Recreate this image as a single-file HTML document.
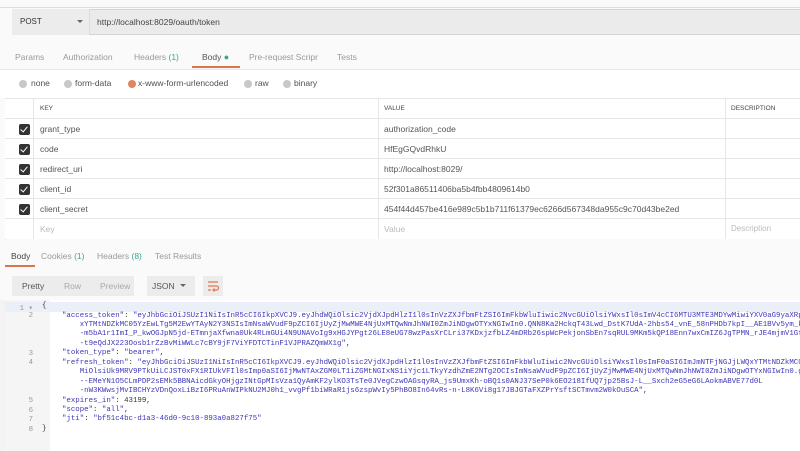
<!DOCTYPE html>
<html><head><meta charset="utf-8"><style>
*{margin:0;padding:0;box-sizing:border-box}
body{width:800px;height:451px;overflow:hidden;background:#fafafa;font-family:"Liberation Sans",sans-serif;position:relative;color:#505050}
.abs{position:absolute}
.t{font-size:8.5px;white-space:nowrap}
.code{position:absolute;left:0;top:300px;width:800px;height:151px;background:#fff;border-left:5px solid #f3f3f3;overflow:hidden}
.ln{position:absolute;left:0;width:48px;font:7.4px "Liberation Mono",monospace;color:#999;text-align:right;padding-right:20px}
.cl{position:absolute;white-space:pre;font:7.4px/9.46px "Liberation Mono",monospace;color:#3d37b8}
.p{color:#333}
.row{position:absolute;left:5px;width:795px;height:20px;border-bottom:1px solid #e6e6e6;background:#fff}
.cb{position:absolute;left:14px;top:5px;width:11px;height:11px;background:#333;border-radius:2px}
.cb:after{content:"";position:absolute;left:3px;top:1px;width:3px;height:6px;border:solid #fff;border-width:0 1.6px 1.6px 0;transform:rotate(40deg)}
.k{position:absolute;left:28px;top:0;height:20px;line-height:20px;padding-left:6px;font-size:8.5px;color:#555;border-left:1px solid #e6e6e6}
.v{position:absolute;left:373px;top:0;height:20px;line-height:20px;padding-left:5px;font-size:8.5px;color:#555;border-left:1px solid #e6e6e6}
.d{position:absolute;left:720px;top:0;height:20px;line-height:20px;padding-left:5px;font-size:8px;color:#555;border-left:1px solid #e6e6e6}
.r{position:absolute;top:80px;width:8px;height:8px;border-radius:50%;background:#c8c8c8}
</style></head><body>
<div class="abs" style="left:0;top:0;width:800px;height:8px;background:#fafafa;border-bottom:1px solid #ddd"></div>
<div class="abs" style="left:12px;top:9px;width:788px;height:26px;background:#ebebeb;border:1px solid #d4d4d4;border-right:none"></div>
<div class="abs" style="left:12px;top:9px;width:78px;height:26px;background:#ececec;border-right:1px solid #dcdcdc"></div>
<div class="abs t" style="left:20px;top:17px;color:#333;font-size:8px">POST</div>
<div class="abs" style="left:77px;top:20px;border:3px solid transparent;border-top:3px solid #666"></div>
<div class="abs t" style="left:97px;top:17px;color:#444;font-size:8.5px">http://localhost:8029/oauth/token</div>
<div class="abs t" style="left:15px;top:52px;color:#999">Params</div>
<div class="abs t" style="left:63px;top:52px;color:#999">Authorization</div>
<div class="abs t" style="left:134px;top:52px;color:#999">Headers <span style="color:#3a9">(1)</span></div>
<div class="abs t" style="left:202px;top:52px;color:#555">Body <span style="color:#3a8;font-size:9px">●</span></div>
<div class="abs" style="left:192px;top:66px;width:48px;height:2px;background:#d9764f"></div>
<div class="abs t" style="left:249px;top:52px;color:#999">Pre-request Scripr</div>
<div class="abs t" style="left:337px;top:52px;color:#999">Tests</div>
<div class="abs" style="left:0;top:69px;width:800px;height:29px;background:#fff;border-top:1px solid #e8e8e8"></div>
<div class="r" style="left:19px"></div><div class="abs t" style="left:31px;top:78px">none</div>
<div class="r" style="left:64px"></div><div class="abs t" style="left:75px;top:78px">form-data</div>
<div class="r" style="left:128px;background:#e0855f"></div><div class="abs t" style="left:138px;top:78px">x-www-form-urlencoded</div>
<div class="r" style="left:244px"></div><div class="abs t" style="left:255px;top:78px">raw</div>
<div class="r" style="left:283px"></div><div class="abs t" style="left:294px;top:78px">binary</div>
<div class="abs" style="left:5px;top:98px;width:795px;height:142px;border-top:1px solid #e6e6e6;border-left:1px solid #e6e6e6"></div>
<div class="row" style="top:99px"><div class="k" style="font-size:6.5px;color:#444">KEY</div><div class="v" style="font-size:6.5px;color:#444">VALUE</div><div class="d" style="font-size:6.5px;color:#444">DESCRIPTION</div></div>
<div class="row" style="top:119px"><div class="cb"></div><div class="k">grant_type</div><div class="v">authorization_code</div><div class="d"></div></div>
<div class="row" style="top:139px"><div class="cb"></div><div class="k">code</div><div class="v">HfEgGQvdRhkU</div><div class="d"></div></div>
<div class="row" style="top:159px"><div class="cb"></div><div class="k">redirect_uri</div><div class="v">http://localhost:8029/</div><div class="d"></div></div>
<div class="row" style="top:179px"><div class="cb"></div><div class="k">client_id</div><div class="v">52f301a86511406ba5b4fbb4809614b0</div><div class="d"></div></div>
<div class="row" style="top:199px"><div class="cb"></div><div class="k">client_secret</div><div class="v">454f44d457be416e989c5b1b711f61379ec6266d567348da955c9c70d43be2ed</div><div class="d"></div></div>
<div class="row" style="top:219px;border-bottom:none"><div class="k" style="color:#bbb">Key</div><div class="v" style="color:#bbb">Value</div><div class="d" style="color:#bbb">Description</div></div>
<div class="abs t" style="left:11px;top:251px;color:#444">Body</div>
<div class="abs" style="left:5px;top:265px;width:30px;height:2px;background:#d9764f"></div>
<div class="abs t" style="left:41px;top:251px;color:#999">Cookies <span style="color:#3a9">(1)</span></div>
<div class="abs t" style="left:97px;top:251px;color:#999">Headers <span style="color:#3a9">(8)</span></div>
<div class="abs t" style="left:155px;top:251px;color:#999">Test Results</div>
<div class="abs" style="left:12px;top:276px;width:122px;height:20px;background:#ececec"></div>
<div class="abs t" style="left:22px;top:281px;color:#555">Pretty</div>
<div class="abs t" style="left:64px;top:281px;color:#aaa">Row</div>
<div class="abs t" style="left:100px;top:281px;color:#aaa">Preview</div>
<div class="abs" style="left:147px;top:276px;width:48px;height:20px;background:#ececec"></div>
<div class="abs t" style="left:152px;top:281px;color:#555">JSON</div>
<div class="abs" style="left:180px;top:284px;border:3px solid transparent;border-top:3px solid #666"></div>
<div class="abs" style="left:203px;top:276px;width:20px;height:20px;background:#ececec"></div>
<svg class="abs" style="left:206px;top:279px" width="14" height="14" viewBox="0 0 14 14" fill="none" stroke="#e0764e" stroke-width="1.2"><path d="M2 3h10M2 7h8.5a2 2 0 0 1 0 4H7M8.5 9.5 7 11l1.5 1.5M2 11h3"/></svg>
<div class="code">
<div class="abs" style="left:0;top:0;width:45px;height:151px;background:#f5f5f5"></div>
<div class="abs" style="left:0;top:2px;width:795px;height:10px;background:#ebeff7"></div>
<div class="ln" style="top:3px">1 ▾</div><div class="ln" style="top:12px">2</div><div class="ln" style="top:50px">3</div><div class="ln" style="top:59px">4</div><div class="ln" style="top:97px">5</div><div class="ln" style="top:107px">6</div><div class="ln" style="top:116px">7</div><div class="ln" style="top:126px">8</div>
<div class="cl" style="left:37px;top:2px"><span class="p">{</span></div>
<div class="cl" style="left:57px;top:11.5px">"access_token"<span class="p">: </span>"eyJhbGciOiJSUzI1NiIsInR5cCI6IkpXVCJ9.eyJhdWQiOlsic2VjdXJpdHlzI1l0sInVzZXJfbmFtZSI6ImFkbWluIiwic2NvcGUiOlsiYWxsIl0sImV4cCI6MTU3MTE3MDYwMiwiYXV0aG9yaXRpZXMiOlsi
    xYTMtNDZkMC05YzEwLTg5M2EwYTAyN2Y3NSIsImNsaWVudF9pZCI6IjUyZjMwMWE4NjUxMTQwNmJhNWI0ZmJiNDgwOTYxNGIwIn0.QNN8Ka2HckqT43Lwd_DstK7UdA-2hbs54_vnE_58nPHDb7kpI__AE1BVv5ym_ki
    -m5bA1r1ImI_P_kwOGJpN5jd-ETmnjaXfwna0Uk4RLmGUi4N9UNAVoIg9xHGJYPgt26LE8eUG78wzPasXrCLri37KDxjzfbLZ4mDRb26spWcPekjonSbEn7sqRUL9MKm5kQP18Enn7wxCmIZ6JgTPMN_rJE4mjmV1Gf
    -t9eQdJX223Oosb1rZzBvMiWWLc7cBY9jF7ViYFDTCTinF1VJPRAZQmWX1g"<span class="p">,</span>
"token_type"<span class="p">: </span>"bearer"<span class="p">,</span>
"refresh_token"<span class="p">: </span>"eyJhbGciOiJSUzI1NiIsInR5cCI6IkpXVCJ9.eyJhdWQiOlsic2VjdXJpdHlzI1l0sInVzZXJfbmFtZSI6ImFkbWluIiwic2NvcGUiOlsiYWxsIl0sImF0aSI6ImJmNTFjNGJjLWQxYTMtNDZkMC05YzEw
    MiOlsiUk9MRV9PTkUiLCJST0xFX1RIUkVFIl0sImp0aSI6IjMwNTAxZGM0LT1iZGMtNGIxNS1iYjc1LTkyYzdhZmE2NTg2OCIsImNsaWVudF9pZCI6IjUyZjMwMWE4NjUxMTQwNmJhNWI0ZmJiNDgwOTYxNGIwIn0.gR
    --EMeYN1O5CLmPDP2sEMk5BBNAicdGkyOHjgzINtGpMIsVza1QyAmKF2ylKO3TsTe0JVegCzwOAGsqyRA_js9UmxKh-oBQ1s0ANJ37SeP0k6EO218IfUQ7jp25BsJ-L__Sxch2eG5eG6LAokmABVE77d0L
    -nW3KWwsjMvIBCHYzVDnQoxLiBzI6PRuAnWIPkNU2MJ0h1_vvgPf1biWRaR1js6zspWvIy5PhBO8In64vRs-n-L8K6Vi8g17JBJGTaFXZPrYsftSCTmvm2W0kOuSCA"<span class="p">,</span>
"expires_in"<span class="p">: 43199,</span>
"scope"<span class="p">: </span>"all"<span class="p">,</span>
"jti"<span class="p">: </span>"bf51c4bc-d1a3-46d0-9c10-893a0a827f75"</div>
<div class="cl" style="left:37px;top:125px"><span class="p">}</span></div>
</div>
</body></html>
